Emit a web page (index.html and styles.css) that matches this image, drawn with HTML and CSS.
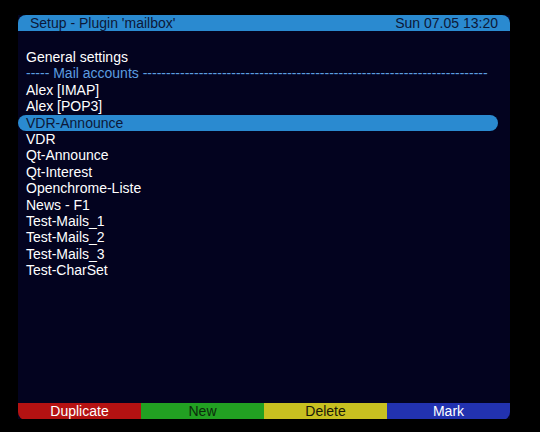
FILE: index.html
```html
<!DOCTYPE html>
<html lang="en">

<head>
    <meta charset="UTF-8">
    <title>Setup - Plugin 'mailbox'</title>
    <link rel="stylesheet" href="styles.css">
</head>

<body>
    <div class="osd">
        <div class="osd-title">
            <span>Setup - Plugin 'mailbox'</span>
            <span>Sun 07.05 13:20</span>
        </div>
        <div class="osd-menu">
            <div class="item">General settings</div>
            <div class="item sep">----- Mail accounts --------------------------------------------------------------------------</div>
            <div class="item">Alex [IMAP]</div>
            <div class="item">Alex [POP3]</div>
            <div class="item current">VDR-Announce</div>
            <div class="item">VDR</div>
            <div class="item">Qt-Announce</div>
            <div class="item">Qt-Interest</div>
            <div class="item">Openchrome-Liste</div>
            <div class="item">News - F1</div>
            <div class="item">Test-Mails_1</div>
            <div class="item">Test-Mails_2</div>
            <div class="item">Test-Mails_3</div>
            <div class="item">Test-CharSet</div>
        </div>
        <div class="osd-buttons">
            <div class="btn red">Duplicate</div>
            <div class="btn green">New</div>
            <div class="btn yellow">Delete</div>
            <div class="btn blue">Mark</div>
        </div>
    </div>
</body>

</html>
```

FILE: styles.css
```css
* {
    margin: 0;
    padding: 0;
    box-sizing: border-box;
}

body {
    background: #000;
    font-family: "Liberation Sans", Arial, sans-serif;
    font-size: 14px;
}

.osd {
    margin: 15px 0 0 18px;
    width: 492px;
    height: 404px;
    display: flex;
    flex-direction: column;
    background: #03031f;
}

.osd-title {
    height: 16px;
    line-height: 16px;
    padding: 0 12px;
    display: flex;
    justify-content: space-between;
    background: #2a8ad0;
    color: #0c1838;
    border-radius: 8px 8px 0 0;
}

.osd-menu {
    flex: 1;
    padding: 18px 12px 0 0;
}

.osd-menu>.item {
    height: 16.4px;
    line-height: 16.4px;
    padding-left: 8px;
    color: #fff;
    white-space: nowrap;
}

.osd-menu>.sep {
    color: #5c9ee0;
}

.osd-menu>.current {
    background: #2a8ad0;
    color: #0c1838;
    border-radius: 8px;
    height: 16px;
    margin: 0.2px 0;
}

.osd-buttons {
    height: 16px;
    display: grid;
    grid-template-columns: repeat(4, 1fr);
    line-height: 17px;
    text-align: center;
}

.btn.red {
    background: #b41212;
    color: #fff;
    border-radius: 0 0 0 8px;
}

.btn.green {
    background: #22a022;
    color: #0c2a0c;
}

.btn.yellow {
    background: #c8c020;
    color: #1a1a08;
}

.btn.blue {
    background: #2232b0;
    color: #fff;
    border-radius: 0 0 8px 0;
}
```
